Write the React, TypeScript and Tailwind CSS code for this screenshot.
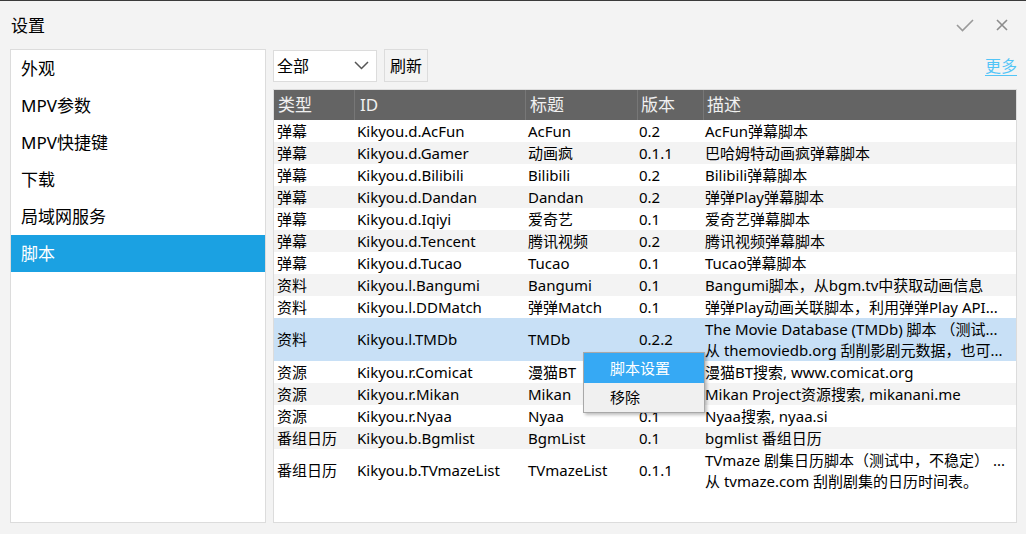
import React from "react";

type Row = {
  type: string;
  id: string;
  title: string;
  ver: string;
  desc: string;
  desc2?: string;
};

const rows: Row[] = [
  { type: "弹幕", id: "Kikyou.d.AcFun", title: "AcFun", ver: "0.2", desc: "AcFun弹幕脚本" },
  { type: "弹幕", id: "Kikyou.d.Gamer", title: "动画疯", ver: "0.1.1", desc: "巴哈姆特动画疯弹幕脚本" },
  { type: "弹幕", id: "Kikyou.d.Bilibili", title: "Bilibili", ver: "0.2", desc: "Bilibili弹幕脚本" },
  { type: "弹幕", id: "Kikyou.d.Dandan", title: "Dandan", ver: "0.2", desc: "弹弹Play弹幕脚本" },
  { type: "弹幕", id: "Kikyou.d.Iqiyi", title: "爱奇艺", ver: "0.1", desc: "爱奇艺弹幕脚本" },
  { type: "弹幕", id: "Kikyou.d.Tencent", title: "腾讯视频", ver: "0.2", desc: "腾讯视频弹幕脚本" },
  { type: "弹幕", id: "Kikyou.d.Tucao", title: "Tucao", ver: "0.1", desc: "Tucao弹幕脚本" },
  { type: "资料", id: "Kikyou.l.Bangumi", title: "Bangumi", ver: "0.1", desc: "Bangumi脚本，从bgm.tv中获取动画信息" },
  { type: "资料", id: "Kikyou.l.DDMatch", title: "弹弹Match", ver: "0.1", desc: "弹弹Play动画关联脚本，利用弹弹Play API..." },
  {
    type: "资料",
    id: "Kikyou.l.TMDb",
    title: "TMDb",
    ver: "0.2.2",
    desc: "The Movie Database (TMDb) 脚本 （测试...",
    desc2: "从 themoviedb.org 刮削影剧元数据，也可...",
  },
  { type: "资源", id: "Kikyou.r.Comicat", title: "漫猫BT", ver: "0.1", desc: "漫猫BT搜索, www.comicat.org" },
  { type: "资源", id: "Kikyou.r.Mikan", title: "Mikan", ver: "0.1", desc: "Mikan Project资源搜索, mikanani.me" },
  { type: "资源", id: "Kikyou.r.Nyaa", title: "Nyaa", ver: "0.1", desc: "Nyaa搜索, nyaa.si" },
  { type: "番组日历", id: "Kikyou.b.Bgmlist", title: "BgmList", ver: "0.1", desc: "bgmlist 番组日历" },
  {
    type: "番组日历",
    id: "Kikyou.b.TVmazeList",
    title: "TVmazeList",
    ver: "0.1.1",
    desc: "TVmaze 剧集日历脚本（测试中，不稳定） ...",
    desc2: "从 tvmaze.com 刮削剧集的日历时间表。",
  },
];

const SELECTED = 9;

const pages = ["外观", "MPV参数", "MPV快捷键", "下载", "局域网服务", "脚本"];

export default function App() {
  return (
    <div
      className="w-[1026px] h-[534px] bg-[#f3f3f3] border-t border-[#3a3a3a] flex flex-col text-black overflow-hidden"
      style={{ fontFamily: '"Noto Sans", "Noto Sans CJK SC", sans-serif' }}
    >
      {/* title bar */}
      <div className="h-[48px] flex items-center pl-[11px] pr-[18px]">
        <div className="text-[17px] leading-none pt-[1px]">设置</div>
        <div className="ml-auto flex items-center gap-[22px]">
          <svg width="18" height="13" viewBox="0 0 18 13" fill="none">
            <path d="M1 6 L6.5 11.5 L17 1" stroke="#9a9a9a" strokeWidth="1.6" />
          </svg>
          <svg width="12" height="12" viewBox="0 0 12 12" fill="none">
            <path d="M1 1 L11 11 M11 1 L1 11" stroke="#8c8c8c" strokeWidth="1.6" />
          </svg>
        </div>
      </div>

      <div className="flex-1 flex pl-[10px] pr-[9px] pb-[11px] gap-[7px]">
        {/* sidebar */}
        <div className="w-[256px] bg-white border border-[#dcdcdc] pt-[0px]">
          {pages.map((p, i) => (
            <div
              key={p}
              className={`h-[37px] flex items-center pl-[10px] text-[17px] ${
                i === 5 ? "bg-[#1ba1e2] text-white" : ""
              }`}
            >
              {p}
            </div>
          ))}
        </div>

        {/* right side */}
        <div className="flex-1 flex flex-col">
          <div className="h-[33px] flex items-center gap-[7px] mb-[7px]">
            <div className="w-[104px] h-[32px] bg-white border border-[#dcdcdc] flex items-center pl-[3px] pr-[7px]">
              <span className="text-[16px]">全部</span>
              <svg className="ml-auto" width="15" height="9" viewBox="0 0 15 9" fill="none">
                <path d="M1 1 L7.5 7.5 L14 1" stroke="#555" strokeWidth="1.5" />
              </svg>
            </div>
            <div className="h-[33px] px-[5px] bg-[#f3f3f3] border border-[#dcdcdc] flex items-center text-[16px]">
              刷新
            </div>
            <div className="ml-auto text-[16px] text-[#52c5f7] underline underline-offset-[3px] pr-[0px]">更多</div>
          </div>

          {/* table */}
          <div className="relative flex-1 bg-white border border-[#dcdcdc] overflow-hidden">
            <div className="grid grid-cols-[80px_171px_112px_66px_1fr] h-[30px] bg-[#646464] text-[#f0f0f0] text-[17px]">
              <div className="flex items-center pl-[4px]">类型</div>
              <div className="flex items-center pl-[5px] border-l border-[#777]">ID</div>
              <div className="flex items-center pl-[4px] border-l border-[#777]">标题</div>
              <div className="flex items-center pl-[3px] border-l border-[#777]">版本</div>
              <div className="flex items-center pl-[3px] border-l border-[#777]">描述</div>
            </div>
            {rows.map((r, i) => {
              const bg = i === SELECTED ? "bg-[#c8e0f6]" : i % 2 === 1 ? "bg-[#f3f3f3]" : "bg-white";
              return (
                <div
                  key={r.id}
                  className={`grid grid-cols-[80px_171px_112px_66px_1fr] text-[15px] leading-[21px] ${
                    r.desc2 ? "h-[43px]" : "h-[22px]"
                  } ${bg}`}
                >
                  <div className="flex items-center pl-[3px] whitespace-nowrap">{r.type}</div>
                  <div className="flex items-center pl-[3px] whitespace-nowrap">{r.id}</div>
                  <div className="flex items-center pl-[3px] whitespace-nowrap">{r.title}</div>
                  <div className="flex items-center pl-[2px] whitespace-nowrap">{r.ver}</div>
                  <div className="flex flex-col justify-center pl-[2px] whitespace-nowrap overflow-hidden">
                    <div>{r.desc}</div>
                    {r.desc2 && <div>{r.desc2}</div>}
                  </div>
                </div>
              );
            })}

            {/* context menu */}
            <div className="absolute left-[309px] top-[262px] w-[122px] bg-[#f0f0f0] border border-[#a8a8a8] shadow-[2px_2px_3px_rgba(0,0,0,0.25)] text-[15px]">
              <div className="h-[30px] bg-[#36a9f4] text-white flex items-center pl-[26px]">脚本设置</div>
              <div className="h-[29px] flex items-center pl-[26px]">移除</div>
            </div>
          </div>
        </div>
      </div>
    </div>
  );
}
